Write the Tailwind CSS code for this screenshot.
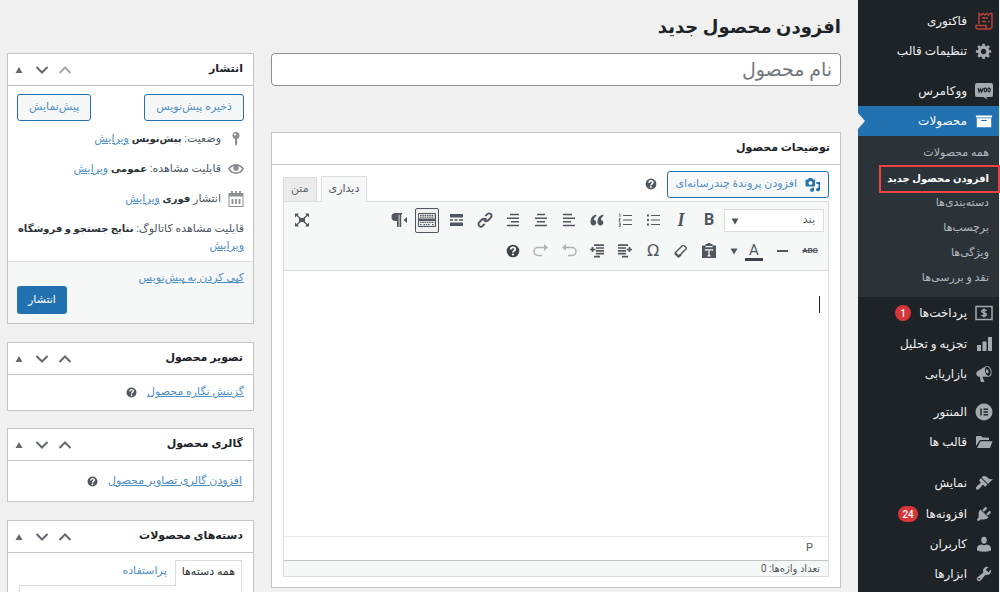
<!DOCTYPE html>
<html lang="fa" dir="rtl">
<head>
<meta charset="utf-8">
<title>افزودن محصول جدید</title>
<script src="https://cdn.jsdelivr.net/npm/@tailwindcss/browser@4"></script>
</head>
<body class="h-screen overflow-hidden bg-[#f0f0f1] ps-px font-['Roboto','DejaVu_Sans',sans-serif] text-[11px] text-[#50575e]">
<svg class="hidden" aria-hidden="true">
  <symbol id="help" viewBox="0 0 20 20"><circle cx="10" cy="10" r="9" fill="currentColor"/><path d="M6.800 8c0-4.200 6.400-4.200 6.400-.6 0 2.200-3.200 2.400-3.200 4.600" fill="none" stroke="#fff" stroke-width="2.600"/><circle cx="10" cy="15" r="1.600" fill="#fff"/></symbol>
  <symbol id="up" viewBox="0 0 14 14"><path d="M1.500 10 7 4.500 12.500 10" fill="none" stroke="currentColor" stroke-width="2"/></symbol>
  <symbol id="down" viewBox="0 0 14 14"><path d="M1.500 4 7 9.500 12.500 4" fill="none" stroke="currentColor" stroke-width="2"/></symbol>
  <symbol id="tri" viewBox="0 0 8 8"><path d="M4 1 7.500 7h-7z" fill="currentColor"/></symbol>
  <symbol id="tridown" viewBox="0 0 8 8"><path d="M4 7.500 7.500 1.500h-7z" fill="currentColor"/></symbol>
</svg>
<div class="flex h-full items-stretch">

  <nav aria-label="منوی مدیریت" class="w-[141px] shrink-0 bg-[#1d2327] pt-1.5 text-[12px] font-medium text-[#f0f0f1]">
    <a href="#" class="flex h-[30px] items-center gap-2 ps-1.5">
      <svg class="size-[18px] text-[#b8403c]" viewBox="0 0 18 18" fill="none" stroke="currentColor" stroke-width="1.500"><path d="M4 12V1.500l2 1.500 1.800-1.500L9.700 3l1.800-1.500L13.300 3 15 1.500h2V14c0 2-1 3-3 3H3c-1.500 0-2-1-2-2v-1.500h10V15c0 1 1 2 2.500 2M7 6h6M7 9.500h4M13 9.500h1.500"/></svg>فاکتوری</a>
    <a href="#" class="flex h-[30px] items-center gap-2 ps-1.5">
      <svg class="size-[18px] text-[#a7aaad]" viewBox="0 0 20 20" fill="currentColor"><path d="M18 12h-2.180c-.17.7-.44 1.350-.81 1.930l1.540 1.540-2.100 2.100-1.540-1.540c-.58.36-1.230.63-1.910.79V19H8v-2.180c-.68-.16-1.330-.43-1.910-.79l-1.540 1.540-2.120-2.120 1.540-1.540c-.36-.58-.63-1.230-.79-1.910H1V9.030h2.170c.16-.7.44-1.350.8-1.940L2.430 5.550l2.100-2.100 1.540 1.540c.58-.37 1.240-.64 1.930-.81V2h3v2.180c.68.16 1.330.43 1.910.79l1.540-1.540 2.120 2.120-1.540 1.540c.36.59.64 1.240.8 1.940H18V12zm-8.500 1.500c1.660 0 3-1.340 3-3s-1.340-3-3-3-3 1.340-3 3 1.340 3 3 3z"/></svg>تنظیمات قالب</a>
    <a href="#" class="mt-[10px] flex h-[30px] items-center gap-2 ps-1.5">
      <svg class="size-[18px] text-[#a7aaad]" viewBox="0 0 18 18"><path d="M2 1h14q2 0 2 2v10q0 2-2 2h-4.500l1 2.500L8.500 15H2q-2 0-2-2V3q0-2 2-2z" fill="currentColor"/><path d="m3 6 1.200 4L5.500 7l1.200 3 1.500-4" fill="none" stroke="#1d2327" stroke-width="1.200"/><ellipse cx="10.300" cy="8" rx="1.200" ry="1.800" fill="none" stroke="#1d2327" stroke-width="1.200"/><ellipse cx="14" cy="8" rx="1.200" ry="1.800" fill="none" stroke="#1d2327" stroke-width="1.200"/></svg>ووکامرس</a>
    <a href="#" aria-current="true" class="relative flex h-[30px] items-center gap-2 bg-[#2271b1] ps-1.5 text-white">
      <svg class="size-[18px]" viewBox="0 0 20 20" fill="currentColor"><path d="M19 4v2H1V4h18zM2 7h16v10H2V7zm11 3V9H7v1h6z"/></svg>محصولات
      <svg class="absolute top-[7px] left-0 h-4 w-[7px]" viewBox="0 0 7 16"><path d="M0 0l7 8-7 8z" fill="#f0f0f1"/></svg></a>
    <div class="flex flex-col bg-[#2c3338] pt-[5px] pb-1.5 text-[11px] font-normal text-[#b4b9be]">
      <a href="#" class="flex h-[25px] items-center ps-2.5">همه محصولات</a>
      <a href="#" class="relative flex h-[25px] items-center ps-2.5 text-[10px] font-bold text-white">افزودن محصول جدید<span class="absolute -top-px -right-px h-7 w-[121px] border-2 border-[#ef4043]"></span></a>
      <a href="#" class="flex h-[25px] items-center ps-2.5">دسته‌بندی‌ها</a>
      <a href="#" class="flex h-[25px] items-center ps-2.5">برچسب‌ها</a>
      <a href="#" class="flex h-[25px] items-center ps-2.5">ویژگی‌ها</a>
      <a href="#" class="flex h-[25px] items-center ps-2.5">نقد و بررسی‌ها</a>
    </div>
    <a href="#" class="mt-px flex h-[30px] items-center gap-2 ps-1.5">
      <svg class="size-[18px] text-[#a7aaad]" viewBox="0 0 18 18" fill="none" stroke="currentColor" stroke-width="1.500"><rect x="1" y="2.500" width="16" height="13"/><path d="M11.500 6.800C11 6 6.800 5.500 6.800 7.500S11.400 8.500 11.400 10.500 7 12 6.500 11M9 4.500v9"/></svg>پرداخت‌ها <span class="flex size-4 items-center justify-center rounded-full bg-[#d63638] text-[10px] text-white">1</span></a>
    <a href="#" class="mt-px flex h-[30px] items-center gap-2 ps-1.5">
      <svg class="size-[18px] text-[#a7aaad]" viewBox="0 0 18 18" fill="currentColor"><path d="M2 10h4v6H2zM7.500 6.500h4V16h-4zM13 2h4v14h-4z"/></svg>تجزیه و تحلیل</a>
    <a href="#" class="flex h-[30px] items-center gap-2 ps-1.5">
      <svg class="size-[18px] text-[#a7aaad]" viewBox="0 0 20 20" fill="currentColor"><path d="M18.150 5.940c.46 1.620.38 3.220-.02 4.480-.42 1.280-1.260 2.180-2.300 2.480-.16.06-.26.06-.4.06-.06.02-.12.02-.18.02-.06.02-.14.02-.22.02h-6.800l2.220 5.500c.02.14-.06.26-.14.34-.08.1-.24.16-.34.16H6.950c-.1 0-.26-.06-.34-.16-.08-.08-.16-.2-.14-.34l-1-5.500H4.250l-.02-.02c-.5.06-1.080-.18-1.540-.62s-.88-1.080-1.060-1.880c-.24-.8-.2-1.560-.02-2.200.18-.62.58-1.080 1.060-1.300l.02-.02 9-5.400c.1-.06.18-.1.24-.16.06-.04.14-.08.24-.12.16-.08.28-.12.5-.18 1.040-.3 2.240.1 3.220.98s1.840 2.240 2.260 3.860zm-2.580 5.980h-.02c.4-.1.74-.34 1.040-.7.58-.7.86-1.760.86-3.040 0-.64-.1-1.300-.28-1.980-.34-1.360-1.020-2.500-1.780-3.240s-1.680-1.100-2.460-.88c-.82.22-1.400.96-1.700 2-.32 1.040-.28 2.360.06 3.720.38 1.360 1 2.500 1.800 3.240.78.74 1.620 1.100 2.480.88zm-2.540-7.080c.22-.04.42-.02.62.04.38.16.76.48 1.020 1s.42 1.200.42 1.780c0 .3-.04.56-.12.8-.18.48-.44.84-.86.94-.34.1-.8-.06-1.140-.4s-.64-.86-.78-1.500c-.18-.62-.12-1.240.02-1.720s.48-.84.82-.94z"/></svg>بازاریابی</a>
    <a href="#" class="mt-2 flex h-[30px] items-center gap-2 ps-1.5">
      <svg class="size-[18px] text-[#a7aaad]" viewBox="0 0 18 18"><circle cx="9" cy="9" r="8.500" fill="currentColor"/><path d="M6 5.500v7M8.500 6.200H13M8.500 9H13M8.500 11.800H13" stroke="#1d2327" stroke-width="1.400"/></svg>المنتور</a>
    <a href="#" class="flex h-[30px] items-center gap-2 ps-1.5">
      <svg class="size-[18px] text-[#a7aaad]" viewBox="0 0 18 18" fill="currentColor"><path d="M1 13V4q0-1 1-1h4l1.500 1.500H13q1 0 1 1V7H5zM5.500 8.200H17.500L15 15H2z"/></svg>قالب ها</a>
    <a href="#" class="mt-[11px] flex h-[30px] items-center gap-2 ps-1.5">
      <svg class="size-[18px] text-[#a7aaad]" viewBox="0 0 20 20" fill="currentColor"><path d="M14.480 11.060L7.410 3.990l1.500-1.500c.5-.56 2.300-.47 3.510.32 1.210.8 1.430 1.280 2.910 2.100 1.180.64 2.450 1.260 4.450.85zm-.71.71L6.700 4.700 4.930 6.470c-.39.39-.39 1.020 0 1.410l1.060 1.060c.39.39.39 1.030 0 1.420-.6.6-1.430 1.110-2.210 1.690-.35.26-.7.53-1.010.84C1.430 14.230.4 16.080 1.400 17.070c.99 1 2.840-.03 4.180-1.360.31-.31.58-.66.85-1.020.57-.78 1.080-1.610 1.690-2.210.39-.39 1.020-.39 1.410 0l1.060 1.060c.39.39 1.020.39 1.410 0z"/></svg>نمایش</a>
    <a href="#" class="mt-px flex h-[30px] items-center gap-2 ps-1.5">
      <svg class="size-[18px] text-[#a7aaad]" viewBox="0 0 20 20" fill="currentColor"><path d="M13.110 4.360L9.870 7.600 8 5.730l3.240-3.240c.35-.34 1.050-.2 1.560.32.52.51.66 1.210.31 1.550zm-8 1.770l.91-1.120 9.010 9.010-1.190.84c-.71.71-2.630 1.160-3.820 1.160H6.140L4.900 17.260c-.59.59-1.540.59-2.120 0-.59-.58-.59-1.530 0-2.120l1.240-1.240v-3.880c0-1.130.4-3.190 1.090-3.890zm7.260 3.970l3.240-3.240c.34-.35 1.040-.21 1.550.31.52.51.66 1.210.31 1.550l-3.240 3.250z"/></svg>افزونه‌ها <span class="flex h-4 items-center justify-center rounded-full bg-[#d63638] px-1 text-[10px] text-white">24</span></a>
    <a href="#" class="flex h-[30px] items-center gap-2 ps-1.5">
      <svg class="size-[18px] text-[#a7aaad]" viewBox="0 0 20 20" fill="currentColor"><path d="M10 9.800C7.800 9.800 6.800 7.600 6.800 5.600S8 2 10 2s3.200 1.600 3.200 3.600S12.200 9.800 10 9.800zM7 10.600q3 1.600 6 0c3 .2 4.800 2 4.800 4.400V17.200Q14 18.500 10 18.500T2.200 17.200V15c0-2.400 1.800-4.200 4.800-4.400z"/></svg>کاربران</a>
    <a href="#" class="flex h-[30px] items-center gap-2 ps-1.5">
      <svg class="size-[18px] text-[#a7aaad]" viewBox="0 0 20 20" fill="currentColor"><path d="M16.680 9.770c-1.340 1.340-3.300 1.670-4.950.99l-5.410 6.520c-.99.99-2.590.99-3.580 0s-.99-2.590 0-3.570l6.520-5.420c-.68-1.650-.35-3.610.99-4.950 1.280-1.280 3.120-1.620 4.720-1.060l-2.890 2.890 2.820 2.820 2.860-2.870c.53 1.580.18 3.390-1.080 4.650zM3.810 16.210c.4.39 1.040.39 1.430 0 .4-.4.4-1.040 0-1.430-.39-.4-1.030-.4-1.430 0-.39.39-.39 1.030 0 1.430z"/></svg>ابزارها</a>
  </nav>

  <main class="flex min-w-0 flex-1 items-start gap-[17px] ps-[17px] pe-[7px]">
    <div class="min-w-0 flex-1">
      <h1 class="flex h-[53px] items-center text-[18px] font-bold text-[#1d2327]">افزودن محصول جدید</h1>
      <input type="text" aria-label="نام محصول" placeholder="نام محصول" class="block h-[33px] w-full rounded-[4px] border border-[#8c8f94] bg-white px-2 text-[19px] placeholder:text-[#72777c]">

      <section class="mt-[46px] border border-[#c3c4c7] bg-white">
        <h2 class="flex h-8 items-center border-b border-[#c3c4c7] px-2.5 text-[11px] font-bold text-[#1d2327]">توضیحات محصول</h2>
        <div class="px-[11px] pt-1.5 pb-2.5">
          <div class="flex h-[30px] items-start">
            <button class="flex h-[27px] items-center gap-2 rounded-[3px] border border-[#2271b1] bg-[#f6f7f7] px-[7px] text-[11px] text-[#4f8fc4]">
              <svg class="size-4 text-[#2271b1]" viewBox="0 0 16 16"><path d="M1.500 2.500H3L4 1h3l1 1.500h1.500q.5 0 .5.500v5.500q0 1-1 1H1.500q-1 0-1-1v-5q0-1 1-1z" fill="currentColor"/><circle cx="5.500" cy="6" r="2" fill="#f6f7f7"/><path d="M11.500 5H15v7.500a2 1.800 0 1 1-1.500-1.700V7h-2zM9 10.500V13a2 1.800 0 1 1-1.500-1.700v-.8z" fill="currentColor"/></svg>افزودن پروندهٔ چندرسانه‌ای</button>
            <svg class="ms-2.5 mt-[7px] size-3 text-[#50575e]"><use href="#help"/></svg>
            <div class="ms-auto flex items-end gap-1 self-end">
              <button class="relative -mb-px h-[26px] border border-b-0 border-[#dcdcde] bg-[#f6f7f7] px-[7px] text-[11px]">دیداری</button>
              <button class="h-6 border border-b-0 border-[#dcdcde] bg-[#ebebeb] px-[7px] text-[11px] text-[#646970]">متن</button>
            </div>
          </div>
          <div class="border border-[#dcdcde]">
            <div class="h-[69px] border-b border-[#dcdcde] bg-[#f6f7f7] px-1 pt-1 text-[#50575e]">
              <div class="flex h-7 items-center">
                <div class="relative me-px h-[23px] w-[100px]">
                  <select aria-label="قالب بند" class="h-full w-full appearance-none border border-[#dcdcde] bg-white px-2 text-[11px]"><option>بند</option></select>
                  <svg class="pointer-events-none absolute top-2 left-[7px] size-2"><use href="#tridown"/></svg>
                </div>
                <button aria-label="ضخیم" class="w-7 text-[16px] font-bold">B</button>
                <button aria-label="مورب" class="w-7 font-['Liberation_Serif'] text-[18px] font-bold italic">I</button>
                <button aria-label="فهرست نشانه‌دار" class="flex w-7 justify-center"><svg class="size-[14px]" viewBox="0 0 14 14" stroke="currentColor"><path d="M5 2.500h9M5 7h9M5 11.500h9"/><path d="M1 2.500h2M1 7h2M1 11.500h2" stroke-width="2"/></svg></button>
                <button aria-label="فهرست شماره‌دار" class="flex w-7 justify-center"><svg class="size-[14px]" viewBox="0 0 14 14" stroke="currentColor" fill="none"><path d="M5 2.500h9M5 7h9M5 11.500h9"/><path d="M1 1h1v3M.800 5.500h1.400v1.300H1V8.300h1.500M.800 10h1.500v3.500H.8M1 11.700h1" stroke-width=".8"/></svg></button>
                <button aria-label="نقل قول" class="flex w-7 justify-center"><svg class="size-[14px]" viewBox="0 0 14 14" fill="currentColor"><path d="M6 1.500C2.500 2.500.5 5 .5 8.500c0 2.500 1.200 4 3 4 1.600 0 2.800-1.200 2.800-2.900C6.300 8 5.200 7 3.900 7 4 5 5 3.800 6.500 3zM13 1.500C9.500 2.500 7.500 5 7.500 8.500c0 2.500 1.200 4 3 4 1.600 0 2.800-1.200 2.800-2.900 0-1.600-1.100-2.600-2.400-2.600.1-2 1.100-3.200 2.600-4z"/></svg></button>
                <button aria-label="چپ‌چین" class="flex w-7 justify-center"><svg class="size-[14px]" viewBox="0 0 14 14" stroke="currentColor" stroke-width="1.600"><path d="M1 1.500h9M1 5.200h12M1 8.800h8M1 12.500h12"/></svg></button>
                <button aria-label="وسط‌چین" class="flex w-7 justify-center"><svg class="size-[14px]" viewBox="0 0 14 14" stroke="currentColor" stroke-width="1.600"><path d="M3 1.500h8M1 5.200h12M3 8.800h8M1 12.500h12"/></svg></button>
                <button aria-label="راست‌چین" class="flex w-7 justify-center"><svg class="size-[14px]" viewBox="0 0 14 14" stroke="currentColor" stroke-width="1.600"><path d="M4 1.500h9M1 5.200h12M5 8.800h8M1 12.500h12"/></svg></button>
                <button aria-label="پیوند" class="flex w-7 justify-center"><svg class="size-4" viewBox="0 0 16 16" fill="none" stroke="currentColor" stroke-width="1.900"><path d="M6.800 9.200 9.500 6.500M8.300 4.200l2-2a2.400 2.400 0 0 1 3.500 3.500l-2.800 2.800a2.400 2.400 0 0 1-3.200.2M7.700 11.800l-2 2a2.400 2.400 0 0 1-3.500-3.500L5 7.500a2.400 2.400 0 0 1 3.200-.2"/></svg></button>
                <button aria-label="ادامه مطلب" class="flex w-[30px] justify-center"><svg class="size-[14px]" viewBox="0 0 14 14" fill="currentColor"><path d="M1 1h13v3.500H1zM1 9.500h13V13H1zM1 6.300h3v1.400H1zM5.500 6.300h3v1.400h-3zM10 6.300h4v1.400h-4z"/></svg></button>
                <button aria-label="نوار ابزار" aria-pressed="true" class="mx-0.5 flex h-[25px] w-6 items-center justify-center rounded-[2px] border border-[#50575e] bg-[#f0f0f1]"><svg class="h-4 w-[18px]" viewBox="0 0 18 16" fill="none" stroke="currentColor"><path d="M.5 1.500h17V7H.5zM.5 8.500h17v6H.5z"/><path d="M2 3.300h14.500M2 5.200h14.500M2 10.300h14.500M2 12.600h2.500M5.500 12.600h7M14 12.600h2.500" stroke-width="1.300" stroke-dasharray="1.500 .8"/><path d="M0 7.800h18" stroke-width="1.500"/></svg></button>
                <button aria-label="راست به چپ" class="flex w-7 justify-center"><svg class="h-[14px] w-4" viewBox="0 0 16 14" fill="currentColor"><path d="M4.500 0H11v1.800h-.8V14H8.500V1.800H7.700V14H6V8H4.500a4 4 0 0 1 0-8zM16 4v6l-3.500-3z"/></svg></button>
                <button aria-label="تمام صفحه" class="ms-auto flex w-7 justify-center"><svg class="size-4" viewBox="0 0 16 16" fill="currentColor"><path d="M1 1.500h4L1 5.500zM15 1.500v4l-4-4zM1 14.500v-4l4 4zM15 14.500h-4l4-4zM5 6h6v4H5z"/><path d="m2 2.500 12 11M14 2.500l-12 11" stroke="currentColor" stroke-width="1.200"/></svg></button>
              </div>
              <div class="mt-[3px] flex h-7 items-center">
                <button aria-label="خط‌خورده" class="w-7 text-[8px] font-bold line-through">ABC</button>
                <button aria-label="خط افقی" class="flex w-7 justify-center"><span class="h-0.5 w-[11px] bg-[#50575e]"></span></button>
                <button aria-label="رنگ متن" class="flex w-7 justify-center"><span class="h-[19px] w-[18px] border-b-[3px] border-[#3c434a] text-[15px] leading-4">A</span></button>
                <button aria-label="انتخاب رنگ" class="flex w-[17px] ps-0.5"><svg class="size-2"><use href="#tridown"/></svg></button>
                <button aria-label="چسباندن متن" class="flex w-7 justify-center"><svg class="size-4" viewBox="0 0 16 16"><path d="M1 2.500h3.500V1h1.800a1.800 1.800 0 0 1 3.400 0h1.800v1.500H15V15H1z" fill="currentColor"/><path d="M4.500 3.700h7M4.500 7.800v-1h7v1M8 7v6M6.500 12.800h3" fill="none" stroke="#f6f7f7" stroke-width="1.300"/></svg></button>
                <button aria-label="پاک کردن قالب" class="flex w-7 justify-center"><svg class="size-[14px]" viewBox="0 0 14 14" fill="none" stroke="currentColor" stroke-width="1.400"><path d="m1.500 8.500 6.800-6.800q.7-.7 2 .1l1.700 1.700q.6.800 0 1.500l-6.800 6.800q-.7.700-1.800 0L1.600 10.300q-.8-.9-.1-1.800z"/><path d="m1.500 9.500 3 3 2.500-2" stroke-width="2.200"/></svg></button>
                <button aria-label="نویسه ویژه" class="w-7 font-['DejaVu_Sans'] text-[16px] leading-5">Ω</button>
                <button aria-label="کاهش تورفتگی" class="flex w-7 justify-center"><svg class="size-[14px]" viewBox="0 0 14 14" stroke="currentColor" stroke-width="1.700"><path d="M0 1.200h10M0 4h8M0 6.800h8M0 9.600h8M4 12.600h6M8.500 5.500h5.500M11.500 3v5" /></svg></button>
                <button aria-label="افزایش تورفتگی" class="flex w-7 justify-center"><svg class="size-[14px]" viewBox="0 0 14 14" stroke="currentColor" stroke-width="1.700"><path d="M4 1.200h10M6 4h8M6 6.800h8M6 9.600h8M4 12.600h6M0 5.500h5.500M2.500 3v5"/></svg></button>
                <button aria-label="برگردان" class="flex w-7 justify-center text-[#b0b3b6]"><svg class="size-4" viewBox="0 0 16 16" fill="none" stroke="currentColor" stroke-width="1.500"><path d="M4 4.500h7a3.800 3.800 0 0 1 0 8H7"/><path d="M5 1 1 4.500 5 8z" fill="currentColor" stroke="none"/></svg></button>
                <button aria-label="ازنو" class="flex w-7 justify-center text-[#b0b3b6]"><svg class="size-4" viewBox="0 0 16 16" fill="none" stroke="currentColor" stroke-width="1.500"><path d="M12 4.500H5a3.800 3.800 0 0 0 0 8h4"/><path d="m11 1 4 3.500L11 8z" fill="currentColor" stroke="none"/></svg></button>
                <button aria-label="راهنما" class="flex w-7 justify-center"><svg class="size-[14px] text-[#3c434a]"><use href="#help"/></svg></button>
              </div>
            </div>
            <div role="textbox" aria-label="توضیحات محصول" aria-multiline="true" contenteditable="true" class="h-[265px] px-2 pt-[25px]"><span class="block h-[17px] w-px bg-[#1d2327]"></span></div>
            <div class="flex h-6 items-center border-t border-[#e5e5e5] px-[15px]">P</div>
            <div class="flex h-4 items-center border-t border-[#c3c4c7] bg-[#f6f7f7] px-2 text-[10px] leading-3">تعداد واژه‌ها: 0</div>
          </div>
        </div>
      </section>
    </div>

    <aside class="flex w-[247px] shrink-0 flex-col gap-[17px] pt-[53px]">
      <section class="border border-[#c3c4c7] bg-white">
        <div class="flex h-8 items-center border-b border-[#c3c4c7] ps-2.5 pe-[7px] text-[#646970]">
          <h2 class="me-auto text-[11px] font-bold text-[#1d2327]">انتشار</h2>
          <button aria-label="بالا" class="text-[#a7aaad]"><svg class="size-[14px]"><use href="#up"/></svg></button>
          <button aria-label="پایین" class="ms-[9px]"><svg class="size-[14px]"><use href="#down"/></svg></button>
          <button aria-label="بستن" class="ms-3"><svg class="size-2"><use href="#tri"/></svg></button>
        </div>
        <div class="px-[9px] pt-2">
          <div class="flex justify-between text-[#4f8fc4]">
            <button class="h-[27px] rounded-[3px] border border-[#2271b1] bg-[#f6f7f7] px-[11px]">ذخیره پیش‌نویس</button>
            <button class="h-[27px] rounded-[3px] border border-[#2271b1] bg-[#f6f7f7] px-[11px]">پیش‌نمایش</button>
          </div>
          <p class="mt-[3px] flex h-[30px] items-center gap-[7px]"><svg class="size-4 text-[#8c8f94]" viewBox="0 0 16 16" fill="currentColor"><circle cx="8" cy="4.500" r="3.500"/><path d="M7 7h2.200v6L8 15l-1-2z"/><circle cx="7" cy="3.500" r="1" fill="#fff"/></svg><span>وضعیت: <b class="text-[10px] text-[#2c3338]">پیش‌نویس</b> <a href="#" class="text-[#4f8fc4] underline">ویرایش</a></span></p>
          <p class="flex h-[30px] items-center gap-[7px]"><svg class="size-4 text-[#8c8f94]" viewBox="0 0 20 20" fill="currentColor"><path d="M19.700 9.400C17.700 6 14 3.900 10 3.900S2.300 6 .3 9.400L0 10l.3.600c2 3.400 5.700 5.500 9.700 5.500s7.700-2.100 9.700-5.500l.3-.6-.3-.6zM10 14.100c-3.100 0-6-1.600-7.700-4.100C3.600 8 5.700 6.600 8 6.100c-.9.6-1.500 1.700-1.500 2.900 0 1.900 1.600 3.500 3.500 3.500s3.500-1.600 3.500-3.500c0-1.200-.6-2.300-1.500-2.900 2.300.5 4.400 1.900 5.700 3.900-1.700 2.500-4.600 4.100-7.700 4.100z"/></svg><span>قابلیت مشاهده: <b class="text-[10px] text-[#2c3338]">عمومی</b> <a href="#" class="text-[#4f8fc4] underline">ویرایش</a></span></p>
          <p class="flex h-[30px] items-center gap-[7px]"><svg class="size-4 text-[#8c8f94]" viewBox="0 0 16 16" fill="none" stroke="currentColor"><rect x="1" y="2.500" width="14" height="13"/><path d="M1 4h14" stroke-width="3"/><path d="M4 0v3M8 0v3M12 0v3M4.500 8v5M8 8v5M11.500 8v5" stroke-width="1.800"/></svg><span>انتشار <b class="text-[10px] text-[#2c3338]">فوری</b> <a href="#" class="text-[#4f8fc4] underline">ویرایش</a></span></p>
          <p class="h-[47px] pt-1.5 leading-[17px]">قابلیت مشاهده کاتالوگ: <b class="text-[10px] text-[#2c3338]">نتایج جستجو و فروشگاه</b> <a href="#" class="text-[#4f8fc4] underline">ویرایش</a></p>
        </div>
        <div class="flex h-[62px] flex-col border-t border-[#dcdcde] bg-[#f6f7f7] px-[9px] pt-2">
          <a href="#" class="self-start leading-4 text-[#4f8fc4] underline">کپی کردن به پیش‌نویس</a>
          <button class="h-7 self-end rounded-[3px] bg-[#2271b1] px-[11px] text-white">انتشار</button>
        </div>
      </section>

      <section class="mt-px border border-[#c3c4c7] bg-white">
        <div class="flex h-8 items-center border-b border-[#c3c4c7] ps-2.5 pe-[7px] text-[#646970]">
          <h2 class="me-auto text-[11px] font-bold text-[#1d2327]">تصویر محصول</h2>
          <button aria-label="بالا"><svg class="size-[14px]"><use href="#up"/></svg></button>
          <button aria-label="پایین" class="ms-[9px]"><svg class="size-[14px]"><use href="#down"/></svg></button>
          <button aria-label="بستن" class="ms-3"><svg class="size-2"><use href="#tri"/></svg></button>
        </div>
        <div class="flex h-[35px] items-center gap-2.5 px-[9px]"><a href="#" class="text-[#4f8fc4] underline">گزینش نگاره محصول</a><svg class="size-[11px]"><use href="#help"/></svg></div>
      </section>

      <section class="border border-[#c3c4c7] bg-white">
        <div class="flex h-8 items-center border-b border-[#c3c4c7] ps-2.5 pe-[7px] text-[#646970]">
          <h2 class="me-auto text-[11px] font-bold text-[#1d2327]">گالری محصول</h2>
          <button aria-label="بالا"><svg class="size-[14px]"><use href="#up"/></svg></button>
          <button aria-label="پایین" class="ms-[9px]"><svg class="size-[14px]"><use href="#down"/></svg></button>
          <button aria-label="بستن" class="ms-3"><svg class="size-2"><use href="#tri"/></svg></button>
        </div>
        <div class="flex h-10 items-center gap-2.5 px-[11px]"><a href="#" class="text-[#4f8fc4] underline">افزودن گالری تصاویر محصول</a><svg class="size-[11px]"><use href="#help"/></svg></div>
      </section>

      <section class="mt-px border border-[#c3c4c7] bg-white">
        <div class="flex h-8 items-center border-b border-[#c3c4c7] ps-2.5 pe-[7px] text-[#646970]">
          <h2 class="me-auto text-[11px] font-bold text-[#1d2327]">دسته‌های محصولات</h2>
          <button aria-label="بالا"><svg class="size-[14px]"><use href="#up"/></svg></button>
          <button aria-label="پایین" class="ms-[9px]"><svg class="size-[14px]"><use href="#down"/></svg></button>
          <button aria-label="بستن" class="ms-3"><svg class="size-2"><use href="#tri"/></svg></button>
        </div>
        <div class="px-[11px] pt-1.5">
          <div class="flex items-end">
            <button class="relative -mb-px h-[26px] border border-b-0 border-[#dcdcde] bg-white px-1.5 pb-0.5 text-[#2c3338]">همه دسته‌ها</button>
            <button class="h-[26px] px-2 pb-0.5 text-[#4f8fc4]">پراستفاده</button>
          </div>
          <div class="h-40 border border-[#dcdcde]"></div>
        </div>
      </section>
    </aside>
  </main>
</div>
</body>
</html>
